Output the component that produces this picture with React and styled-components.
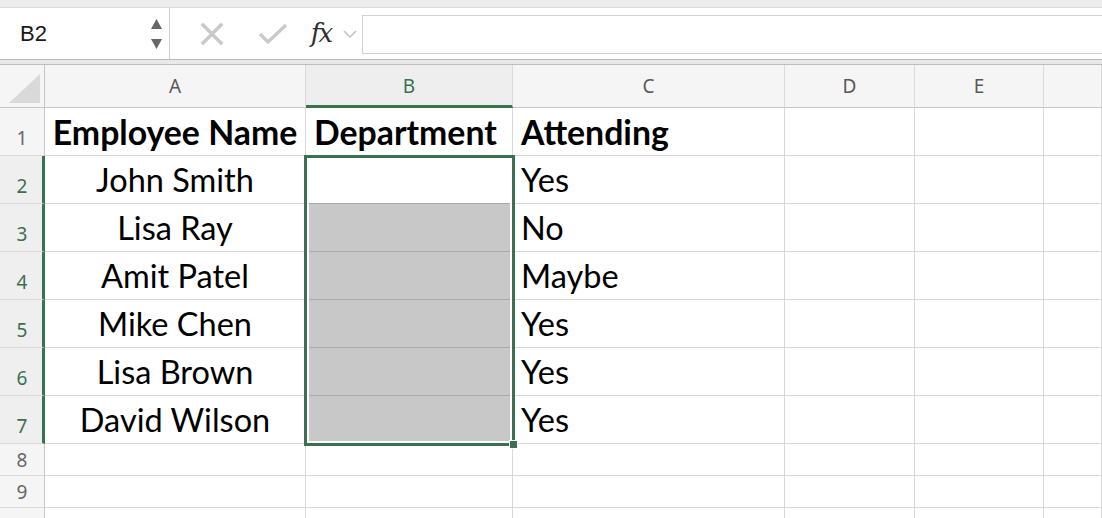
import React from "react";
import styled, { createGlobalStyle } from "styled-components";

const GREEN = "#3a7150";

const Global = createGlobalStyle`
  html, body { margin: 0; padding: 0; background: #ffffff; }
  body { font-family: Lato, "Noto Sans", sans-serif; }
  * { box-sizing: border-box; }
`;

const Page = styled.div`
  width: 1102px;
  height: 518px;
  overflow: hidden;
  display: flex;
  flex-direction: column;
  background: #fff;
`;

const TopBand = styled.div`
  height: 8px;
  flex: none;
  background: #ececec;
  border-bottom: 1px solid #d9d9d9;
`;

const FormulaRow = styled.div`
  height: 51px;
  flex: none;
  display: flex;
  align-items: stretch;
  background: #fff;
`;

const NameBox = styled.div`
  width: 170px;
  flex: none;
  display: flex;
  align-items: center;
  justify-content: space-between;
  padding: 0 7px 0 20px;
  border-right: 1px solid #cfcfcf;
  font-family: "Liberation Sans", Arial, sans-serif;
  font-size: 22px;
  color: #1a1a1a;
`;

const Stepper = styled.div`
  display: flex;
  flex-direction: column;
  gap: 10px;
  margin-top: 1px;
`;

const Actions = styled.div`
  display: flex;
  align-items: center;
  width: 192px;
  flex: none;
  padding-left: 30px;
`;

const IconSlot = styled.div`
  display: flex;
  align-items: center;
  justify-content: center;
  width: ${(p) => p.$w}px;
  margin-right: ${(p) => p.$mr || 0}px;
`;

const Fx = styled.span`
  font-family: "DejaVu Serif", "Liberation Serif", serif;
  font-style: italic;
  font-size: 26px;
  color: #2f2f2f;
  letter-spacing: -2px;
  line-height: 1;
  margin-bottom: 2px;
`;

const FormulaInput = styled.div`
  flex: 1;
  margin: 7px 0 5px 0;
  border: 1px solid #d2d2d2;
  border-right: none;
  background: #fff;
`;

const Separator = styled.div`
  height: 6px;
  flex: none;
  background: #e8e8e8;
  border-top: 1px solid #b9b9b9;
  border-bottom: 1px solid #bdbdbd;
`;

const Sheet = styled.div`
  flex: 1;
  position: relative;
  display: grid;
  grid-template-columns: 45px 261px 207px 272px 130px 129px 1fr;
  grid-template-rows: 43px repeat(7, 48px) 32px 32px 48px;
  overflow: hidden;
`;

const Corner = styled.div`
  background: #f5f5f5;
  border-right: 1px solid #c6c6c6;
  border-bottom: 1px solid #c6c6c6;
  display: flex;
  align-items: flex-end;
  justify-content: flex-end;
  padding: 0 4px 4px 0;
`;

const ColHead = styled.div`
  background: ${(p) => (p.$sel ? "#eeeeee" : "#f5f5f5")};
  border-right: 1px solid #dadada;
  border-bottom: ${(p) => (p.$sel ? `3px solid ${GREEN}` : "1px solid #c6c6c6")};
  display: flex;
  align-items: center;
  justify-content: center;
  padding-top: ${(p) => (p.$sel ? 2 : 0)}px;
  font-family: "Noto Sans", Lato, sans-serif;
  font-size: 19px;
  color: ${(p) => (p.$sel ? GREEN : "#595959")};
`;

const RowHead = styled.div`
  background: ${(p) => (p.$sel ? "#efefef" : "#f5f5f5")};
  border-right: ${(p) => (p.$sel ? `3px solid ${GREEN}` : "1px solid #c6c6c6")};
  border-bottom: 1px solid #dadada;
  display: flex;
  align-items: flex-end;
  justify-content: center;
  padding-bottom: ${(p) => p.$pb}px;
  padding-left: ${(p) => (p.$sel ? 2 : 0)}px;
  font-family: "Noto Sans", Lato, sans-serif;
  font-size: 19px;
  line-height: 24px;
  color: ${(p) => (p.$sel ? GREEN : "#666")};
`;

const Cell = styled.div`
  background: ${(p) => (p.$shade ? "#c8c8c8" : "#fff")};
  border-right: 1px solid #d9d9d9;
  border-bottom: 1px solid ${(p) => (p.$darkLine ? "#a9a9a9" : "#d9d9d9")};
  display: flex;
  align-items: flex-end;
  justify-content: ${(p) => (p.$center ? "center" : "flex-start")};
  padding: 0 8px 4px 8px;
  font-family: Lato, "Noto Sans", sans-serif;
  font-size: ${(p) => (p.$bold ? 33.8 : 32.5)}px;
  line-height: 38px;
  font-weight: ${(p) => (p.$bold ? 700 : 400)};
  color: #000;
  white-space: nowrap;
  overflow: visible;
`;

const Selection = styled.div`
  position: absolute;
  grid-column: 3 / 4;
  grid-row: 3 / 9;
  top: -1px;
  left: -2px;
  right: -2px;
  bottom: -2px;
  border: 3px solid ${GREEN};
  box-shadow: inset 0 0 0 2px #fff;
  pointer-events: none;
  z-index: 2;
`;

const FillHandle = styled.div`
  position: absolute;
  right: -6px;
  bottom: -6px;
  width: 9px;
  height: 9px;
  background: ${GREEN};
  border: 1px solid #fff;
`;

const COLS = ["A", "B", "C", "D", "E", ""];

const DATA = [
  ["Employee Name", "Department", "Attending"],
  ["John Smith", "", "Yes"],
  ["Lisa Ray", "", "No"],
  ["Amit Patel", "", "Maybe"],
  ["Mike Chen", "", "Yes"],
  ["Lisa Brown", "", "Yes"],
  ["David Wilson", "", "Yes"],
  ["", "", ""],
  ["", "", ""],
  ["", "", ""],
];

function CloseIcon() {
  return (
    <svg width="24" height="24" viewBox="0 0 24 24">
      <path d="M3 3 L21 21 M21 3 L3 21" stroke="#c9c9c9" strokeWidth="3.4" strokeLinecap="square" fill="none" />
    </svg>
  );
}

function CheckIcon() {
  return (
    <svg width="30" height="24" viewBox="0 0 30 24">
      <path d="M2 12 L10 20 L28 3" stroke="#c9c9c9" strokeWidth="3.4" fill="none" />
    </svg>
  );
}

function Chevron() {
  return (
    <svg width="14" height="8" viewBox="0 0 14 8">
      <path d="M1 1 L7 7 L13 1" stroke="#c4c4c4" strokeWidth="1.6" fill="none" />
    </svg>
  );
}

function Arrow({ up }) {
  return (
    <svg width="11" height="10" viewBox="0 0 11 10">
      <polygon points={up ? "5.5,0 11,10 0,10" : "0,0 11,0 5.5,10"} fill="#666" />
    </svg>
  );
}

export default function App() {
  return (
    <Page>
      <Global />
      <TopBand />
      <FormulaRow>
        <NameBox>
          <span>B2</span>
          <Stepper>
            <Arrow up />
            <Arrow />
          </Stepper>
        </NameBox>
        <Actions>
          <IconSlot $w={24} $mr={34}>
            <CloseIcon />
          </IconSlot>
          <IconSlot $w={30} $mr={17}>
            <CheckIcon />
          </IconSlot>
          <IconSlot $w={32} $mr={6}>
            <Fx>fx</Fx>
          </IconSlot>
          <IconSlot $w={14}>
            <Chevron />
          </IconSlot>
        </Actions>
        <FormulaInput />
      </FormulaRow>
      <Separator />
      <Sheet>
        <Corner>
          <svg width="31" height="29" viewBox="0 0 31 29">
            <polygon points="31,0 31,29 0,29" fill="#d9d9d9" />
          </svg>
        </Corner>
        {COLS.map((c, i) => (
          <ColHead key={"h" + i} $sel={c === "B"}>
            {c}
          </ColHead>
        ))}
        {DATA.map((row, r) => {
          const n = r + 1;
          const sel = n >= 2 && n <= 7;
          return (
            <React.Fragment key={"r" + n}>
              <RowHead $sel={sel} $pb={n === 8 || n === 9 ? 3 : 5}>
                {n <= 9 ? n : null}
              </RowHead>
              <Cell $center $bold={n === 1}>
                {row[0]}
              </Cell>
              <Cell
                $bold={n === 1}
                $shade={n >= 3 && n <= 7}
                $darkLine={n >= 2 && n <= 7}
              >
                {row[1]}
              </Cell>
              <Cell $bold={n === 1}>{row[2]}</Cell>
              <Cell />
              <Cell />
              <Cell />
            </React.Fragment>
          );
        })}
        <Selection>
          <FillHandle />
        </Selection>
      </Sheet>
    </Page>
  );
}
